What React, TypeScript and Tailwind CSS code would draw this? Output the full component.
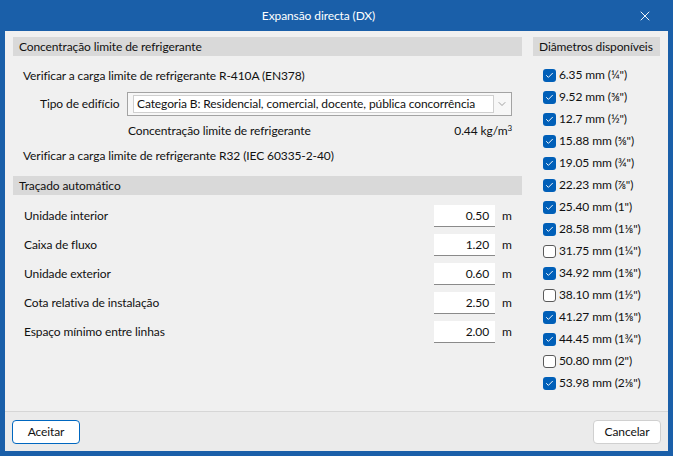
import { Check, ChevronDown, X } from "lucide-react";

const diameters: Array<{ label: string; checked: boolean }> = [
  { label: '6.35 mm (¼")', checked: true },
  { label: '9.52 mm (⅜")', checked: true },
  { label: '12.7 mm (½")', checked: true },
  { label: '15.88 mm (⅝")', checked: true },
  { label: '19.05 mm (¾")', checked: true },
  { label: '22.23 mm (⅞")', checked: true },
  { label: '25.40 mm (1")', checked: true },
  { label: '28.58 mm (1⅛")', checked: true },
  { label: '31.75 mm (1¼")', checked: false },
  { label: '34.92 mm (1⅜")', checked: true },
  { label: '38.10 mm (1½")', checked: false },
  { label: '41.27 mm (1⅝")', checked: true },
  { label: '44.45 mm (1¾")', checked: true },
  { label: '50.80 mm (2")', checked: false },
  { label: '53.98 mm (2⅛")', checked: true },
];

const layout: Array<{ label: string; value: string }> = [
  { label: "Unidade interior", value: "0.50" },
  { label: "Caixa de fluxo", value: "1.20" },
  { label: "Unidade exterior", value: "0.60" },
  { label: "Cota relativa de instalação", value: "2.50" },
  { label: "Espaço mínimo entre linhas", value: "2.00" },
];

function SectionHeader({ title }: { title: string }) {
  return (
    <div className="h-[19px] bg-[#d9d9d9] flex items-center pl-[6px] whitespace-nowrap">
      {title}
    </div>
  );
}

function Checkbox({ checked }: { checked: boolean }) {
  if (checked) {
    return (
      <span className="w-[13px] h-[13px] rounded-[3px] bg-[#005fb8] flex items-center justify-center shrink-0">
        <Check className="w-[9px] h-[9px] text-white" strokeWidth={2.5} />
      </span>
    );
  }
  return (
    <span className="w-[13px] h-[13px] rounded-[3px] border border-[#5a5a5a] bg-white shrink-0" />
  );
}

export default function App() {
  return (
    <div
      className="w-[673px] h-[456px] bg-[#1a5fa9] flex flex-col text-[12px] tracking-[-0.1px] text-[#111111]"
      style={{ fontFamily: 'Lato, "Noto Sans", sans-serif' }}
    >
      {/* Title bar */}
      <div className="h-[31px] shrink-0 relative flex items-center justify-center pr-[36px] text-white">
        <span>Expansão directa (DX)</span>
        <X className="absolute right-[20px] top-[8px] w-[16px] h-[16px] text-white" strokeWidth={1.4} />
      </div>

      {/* Body */}
      <div className="mx-[5px] h-[380px] bg-[#f0f0f0] flex gap-[11px] pt-[6px] pl-[8px] pr-[8px]">
        {/* Left column */}
        <div className="w-[509px] flex flex-col">
          <SectionHeader title="Concentração limite de refrigerante" />
          <div className="h-[20px] mt-[10px] flex items-center pl-[10px]">
            Verificar a carga limite de refrigerante R-410A (EN378)
          </div>
          <div className="h-[24px] mt-[6px] flex items-center">
            <span className="pl-[27px] w-[114px] whitespace-nowrap">Tipo de edifício</span>
            <div className="w-[385px] h-[24px] border border-[#a3a3a3] bg-[#f7f7f7] flex items-center pl-[5px] pr-[1px]">
              <div className="w-[361px] h-[18px] bg-white border border-[#cfcfcf] flex items-center pl-[3px] whitespace-nowrap overflow-hidden">
                Categoria B: Residencial, comercial, docente, pública concorrência
              </div>
              <div className="flex-1 flex items-center justify-center">
                <ChevronDown className="w-[12px] h-[12px] text-[#6b6b6b]" strokeWidth={1.25} />
              </div>
            </div>
          </div>
          <div className="h-[20px] mt-[5px] flex items-center justify-between pl-[115px] pr-[10px]">
            <span>Concentração limite de refrigerante</span>
            <span>
              0.44 kg/m<sup className="text-[8px]">3</sup>
            </span>
          </div>
          <div className="h-[20px] mt-[5px] flex items-center pl-[10px]">
            Verificar a carga limite de refrigerante R32 (IEC 60335-2-40)
          </div>
          <div className="mt-[10px]">
            <SectionHeader title="Traçado automático" />
          </div>
          <div className="mt-[10px] flex flex-col gap-[7px]">
            {layout.map((row) => (
              <div key={row.label} className="h-[22px] flex items-center">
                <span className="pl-[11px] flex-1">{row.label}</span>
                <div className="w-[61px] h-[22px] bg-white border-b border-[#8a8a8a] flex items-center justify-end pr-[6px]">
                  {row.value}
                </div>
                <span className="w-[27px] pl-[7px]">m</span>
              </div>
            ))}
          </div>
        </div>

        {/* Right column */}
        <div className="w-[127px] flex flex-col">
          <SectionHeader title="Diâmetros disponíveis" />
          <div className="mt-[9px] flex flex-col gap-[2px] pl-[10px]">
            {diameters.map((d) => (
              <div key={d.label} className="h-[20px] flex items-center gap-[3px]">
                <Checkbox checked={d.checked} />
                <span className="whitespace-nowrap">{d.label}</span>
              </div>
            ))}
          </div>
        </div>
      </div>

      {/* Footer */}
      <div className="mx-[5px] h-[40px] bg-[#ebebeb] border-t border-[#d6d6d6] flex items-center justify-between px-[7px]">
        <button className="w-[68px] h-[24px] bg-white border border-[#0067c0] rounded-[4px]">
          Aceitar
        </button>
        <button className="w-[68px] h-[24px] bg-white border border-[#d0d0d0] rounded-[4px]">
          Cancelar
        </button>
      </div>
    </div>
  );
}
